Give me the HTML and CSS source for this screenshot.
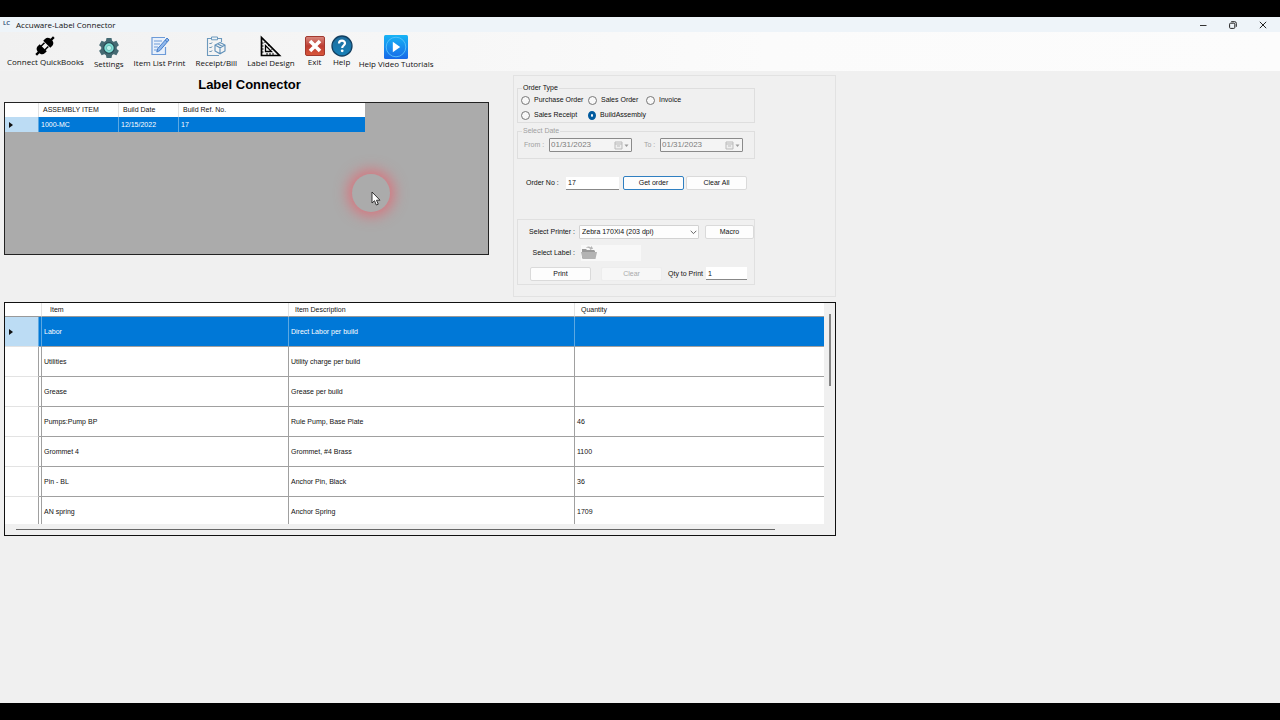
FILE: index.html
```html
<!DOCTYPE html>
<html lang="en">
<head>
<meta charset="utf-8">
<title>Accuware-Label Connector</title>
<link rel="stylesheet" href="styles.css">
</head>
<body>
<div class="window">
  <header class="titlebar">
    <span class="app-icon">LC</span>
    <span class="app-name">Accuware-Label Connector</span>
    <div class="window-buttons">
      <button type="button" aria-label="Minimize"><svg width="8" height="8" viewBox="0 0 8 8"><path d="M1 4.500h6.500" stroke="#333" fill="none"/></svg></button>
      <button type="button" aria-label="Restore"><svg width="8" height="8" viewBox="0 0 8 8"><rect x=".6" y="2.200" width="5.200" height="5.200" rx="1" fill="none" stroke="#222"/><path d="M2.200.7h3.500a1.600 1.600 0 0 1 1.600 1.600v3.500" fill="none" stroke="#222"/></svg></button>
      <button type="button" aria-label="Close"><svg width="8" height="8" viewBox="0 0 8 8"><path d="M.8.8l6.400 6.400M7.200.8L.8 7.200" stroke="#222" fill="none"/></svg></button>
    </div>
  </header>

  <nav class="toolbar">
    <button type="button" class="tool">
      <svg width="20" height="20" viewBox="0 0 20 20"><g transform="rotate(-45 10 10)"><path d="M-2.500 8.800H1.500V11.200H-2.500zM18.500 8.800h4v2.400h-4z"/><path d="M7.500 5v10H5C1.800 15 .8 12.500.8 10S1.800 5 5 5zM12.500 5v10H15c3.200 0 4.200-2.500 4.200-5S18.200 5 15 5z"/><path d="M7 7.300h5M7 12.700h5" stroke="#000" stroke-width="1.500"/></g></svg>
      <span>Connect QuickBooks</span>
    </button>
    <button type="button" class="tool low">
      <svg width="20" height="20" viewBox="0 0 20 20"><g fill="#456a73"><circle cx="10" cy="10" r="7.800"/><path id="tooth" d="M7.500 0h5l.8 4H6.700zM7.500 20h5l.8-4H6.700z"/><use href="#tooth" transform="rotate(60 10 10)"/><use href="#tooth" transform="rotate(120 10 10)"/></g><circle cx="10" cy="10" r="5.300" fill="#7fe0d5" stroke="#274c55" stroke-width="1.200"/><circle cx="10" cy="10" r="2.600" fill="#b9f3ea" stroke="#4b9a9c" stroke-width=".6"/></svg>
      <span>Settings</span>
    </button>
    <button type="button" class="tool">
      <svg width="20" height="21" viewBox="0 0 20 21"><path d="M15 1.500H2v17h13.500V11" fill="#e8f0fb" stroke="#6d9bd8" stroke-width="1.200"/><path d="M4 5h8M4 8h6M4 11h4M4 14h3" stroke="#6d9bd8"/><path d="M17 2l2 2-9 10.500-3.200 1.500 1-3.500z" fill="#8fb7ec" stroke="#477fc9"/><path d="M15.200 4l2 2" stroke="#477fc9"/></svg>
      <span>Item List Print</span>
    </button>
    <button type="button" class="tool">
      <svg width="20" height="21" viewBox="0 0 20 21"><path d="M13 19.500H1.500V2.500h14V6" fill="none" stroke="#6c99bd" stroke-width="1.100"/><path d="M5.500 1h6v2.800h-6z" fill="#eef4f9" stroke="#6c99bd"/><path d="M3.500 7l1 1L6 6.500M3.500 11l1 1L6 10.500M3.500 15l1 1L6 14.500" fill="none" stroke="#47779e"/><path d="M14 6.500l5 2.500v6l-5 2.800L9 15V9zM9 9l5 2.800L19 9M14 11.800v6M11.500 7.800l5 2.800" fill="none" stroke="#5d8fb8" stroke-width="1.100"/></svg>
      <span>Receipt/Bill</span>
    </button>
    <button type="button" class="tool">
      <svg width="21" height="21" viewBox="0 0 21 21"><path d="M1.500 1.500v18h18z" fill="none" stroke="#000" stroke-width="1.700"/><path d="M5.500 9.500v6h6z" fill="none" stroke="#000" stroke-width="1.300"/><path d="M3.500 7h-2M3.500 10h-2M3.500 13h-2M3.500 16h-2M7 17v2M10 17v2M13 17v2M4.500 6.500l1.500-1.200M8 10l1.500-1.200M11.500 13.500l1.500-1.200" stroke="#000"/></svg>
      <span>Label Design</span>
    </button>
    <div class="tool-group">
      <button type="button" class="tool">
        <svg width="20" height="20" viewBox="0 0 20 20"><defs><linearGradient id="red" x2="0" y2="1"><stop stop-color="#d98a80"/><stop offset=".5" stop-color="#bd3d32"/><stop offset="1" stop-color="#d9573b"/></linearGradient></defs><rect x=".5" y=".5" width="19" height="19" rx="1.500" fill="url(#red)" stroke="#a2392f"/><path d="M5 5l10 10M15 5L5 15" stroke="#fff" stroke-width="3.600"/></svg>
        <span>Exit</span>
      </button>
      <button type="button" class="tool high">
        <svg width="22" height="22" viewBox="0 0 22 22"><defs><linearGradient id="teal" x2="0" y2="1"><stop stop-color="#1e6d9d"/><stop offset="1" stop-color="#1680b8"/></linearGradient></defs><circle cx="11" cy="11" r="10" fill="url(#teal)" stroke="#123f61" stroke-width="1.300"/><path d="M8 8.500C8 4.800 14 4.800 14 8.300 14 10.500 11.200 10.500 11.200 13" fill="none" stroke="#fff" stroke-width="2.200"/><circle cx="11.200" cy="15.800" r="1.400" fill="#fff"/></svg>
        <span>Help</span>
      </button>
      <button type="button" class="tool high">
        <svg width="24" height="24" viewBox="0 0 24 24"><defs><linearGradient id="sky" x2="0" y2="1"><stop stop-color="#17b4f5"/><stop offset="1" stop-color="#1769e8"/></linearGradient></defs><rect width="24" height="24" rx="1.500" fill="url(#sky)"/><circle cx="12" cy="12" r="9.800" fill="none" stroke="#58c2fa" stroke-width=".9"/><path d="M8.800 6.800v10.400l7.400-5.200z" fill="#fff"/></svg>
        <span>Help Video Tutorials</span>
      </button>
    </div>
  </nav>

  <main class="content">
    <div class="upper">
      <section class="orders">
        <h1>Label Connector</h1>
        <div class="order-grid">
          <table class="order-table">
            <thead><tr><th class="rowhead"></th><th class="assembly">ASSEMBLY ITEM</th><th class="build-date">Build Date</th><th>Build Ref. No.</th></tr></thead>
            <tbody><tr class="selected"><td class="rowhead"><i class="marker"></i></td><td>1000-MC</td><td>12/15/2022</td><td>17</td></tr></tbody>
          </table>
          <div class="click-halo">
            <svg class="pointer" width="10" height="15" viewBox="0 0 10 15"><path d="M1 1v11l2.500-2.300L5.300 14l2-.8-1.800-4H9z" fill="#fff" stroke="#222" stroke-width=".9"/></svg>
          </div>
        </div>
      </section>

      <form class="panel">
        <fieldset class="order-type">
          <legend>Order Type</legend>
          <label><input type="radio" name="type">Purchase Order</label>
          <label><input type="radio" name="type">Sales Order</label>
          <label><input type="radio" name="type">Invoice</label>
          <label><input type="radio" name="type">Sales Receipt</label>
          <label><input type="radio" name="type" checked>BuildAssembly</label>
        </fieldset>

        <fieldset class="dates" disabled>
          <legend>Select Date</legend>
          <label for="from">From :</label>
          <div class="date-box"><input id="from" type="text" value="01/31/2023"><svg width="16" height="9" viewBox="0 0 16 9"><path d="M1 1h7v7H1zM1 3h7M3 5h3" fill="#eee" stroke="#bbb"/><path d="M10.500 3.500h4l-2 2.500z" fill="#999"/></svg></div>
          <label for="to" class="to">To :</label>
          <div class="date-box"><input id="to" type="text" value="01/31/2023"><svg width="16" height="9" viewBox="0 0 16 9"><path d="M1 1h7v7H1zM1 3h7M3 5h3" fill="#eee" stroke="#bbb"/><path d="M10.500 3.500h4l-2 2.500z" fill="#999"/></svg></div>
        </fieldset>

        <div class="order-row">
          <label for="order">Order No :</label>
          <input id="order" class="field order-no" type="text" value="17">
          <button type="button" class="btn primary">Get order</button>
          <button type="button" class="btn">Clear All</button>
        </div>

        <div class="print-box">
          <div class="print-row">
            <label class="print-label" for="printer">Select Printer :</label>
            <div class="select-wrap"><select id="printer"><option>Zebra 170Xi4 (203 dpi)</option></select><svg width="7" height="5" viewBox="0 0 7 5"><path d="M.7.8l2.800 2.800L6.300.8" fill="none" stroke="#555" stroke-width=".9"/></svg></div>
            <button type="button" class="btn macro">Macro</button>
          </div>
          <div class="print-row">
            <span class="print-label">Select Label :</span>
            <button type="button" class="browse" aria-label="Select label" disabled><svg width="16" height="15" viewBox="0 0 16 15"><path d="M1 6V4h4l1 1h7l1 1v7H1z" fill="#999"/><path d="M0 7h16l-1.500 7h-13z" fill="#b3b3b3"/><path d="M5 3C6 1 8.500 1 10 2.500V.8l2.200 2.700L9 5V3.800C7.500 2.500 6.500 2.500 5 3z" fill="#b5b5b5"/></svg></button>
          </div>
          <div class="print-row actions">
            <button type="button" class="btn">Print</button>
            <button type="button" class="btn clear" disabled>Clear</button>
            <label for="qty">Qty to Print</label>
            <input id="qty" class="field qty" type="text" value="1">
          </div>
        </div>
      </form>
    </div>

    <section class="items">
      <div class="items-view">
        <table class="items-table">
          <thead><tr><th class="rowhead"></th><th class="sliver"></th><th class="item">Item</th><th class="description">Item Description</th><th class="quantity">Quantity</th></tr></thead>
          <tbody>
            <tr class="selected"><td class="rowhead"><i class="marker"></i></td><td></td><td>Labor</td><td>Direct Labor per build</td><td></td></tr>
            <tr><td class="rowhead"></td><td></td><td>Utilities</td><td>Utility charge per build</td><td></td></tr>
            <tr><td class="rowhead"></td><td></td><td>Grease</td><td>Grease per build</td><td></td></tr>
            <tr><td class="rowhead"></td><td></td><td>Pumps:Pump BP</td><td>Rule Pump, Base Plate</td><td>46</td></tr>
            <tr><td class="rowhead"></td><td></td><td>Grommet 4</td><td>Grommet, #4 Brass</td><td>1100</td></tr>
            <tr><td class="rowhead"></td><td></td><td>Pin - BL</td><td>Anchor Pin, Black</td><td>36</td></tr>
            <tr><td class="rowhead"></td><td></td><td>AN spring</td><td>Anchor Spring</td><td>1709</td></tr>
          </tbody>
        </table>
      </div>
      <div class="vscroll"><div class="vthumb"></div></div>
      <div class="hscroll"><div class="hthumb"></div></div>
    </section>
  </main>
</div>
</body>
</html>
```
FILE: styles.css
```css
* { box-sizing: border-box; }

body {
  margin: 0;
  min-height: 100vh;
  padding: 17px 0;
  display: flex;
  background: #000;
  color: #111;
  font: 7px/10px "Liberation Sans", Arial, sans-serif;
}

button, input, select { font: inherit; color: inherit; margin: 0; }

.window {
  flex: 1;
  background: #f0f0f0;
}

/* Title bar */
.titlebar {
  display: flex;
  align-items: center;
  height: 15px;
  padding: 0 9px 0 3px;
  background: #eef4f9;
  font-family: "Open Sans", sans-serif;
  font-size: 8px;
}

.app-icon {
  width: 13px;
  padding-bottom: 4px;
  color: #24406e;
  font-size: 6px;
  font-weight: 600;
}

.window-buttons {
  display: flex;
  gap: 14px;
  margin-left: auto;
}

.window-buttons button {
  width: 16px;
  height: 14px;
  padding: 0;
  border: 0;
  background: none;
}

.window-buttons svg { display: block; margin: 0 auto; }

/* Toolbar */
.toolbar {
  display: flex;
  align-items: flex-start;
  gap: 10px;
  height: 39px;
  padding: 4px 7px 0;
  background: linear-gradient(90deg, #f1f1f1, #fbfbfb 60%, #fcfcfc);
}

.tool-group { display: flex; gap: 6px; }

.tool {
  display: flex;
  flex-direction: column;
  align-items: center;
  gap: 1px;
  padding: 0;
  border: 0;
  background: none;
  font-family: "Open Sans", sans-serif;
  font-size: 8px;
  white-space: nowrap;
}

.tool svg { display: block; overflow: visible; }
.tool.low { padding-top: 2px; }
.tool-group .high { margin-top: -1px; gap: 0; }

/* Main area */
.content {
  width: 65%;
  margin-left: 4px;
  padding-top: 4px;
}

.upper { display: flex; gap: 24px; }

.orders {
  flex: 1;
  display: flex;
  flex-direction: column;
}

h1 {
  margin: 2px 0 9px;
  padding-left: 6px;
  font-size: 13px;
  line-height: 16px;
  text-align: center;
  color: #000;
}

.order-grid {
  position: relative;
  height: 153px;
  border: 1px solid #222;
  background: #ababab;
}

table {
  border-collapse: separate;
  border-spacing: 0;
  table-layout: fixed;
}

th, td {
  padding: 0 2px;
  text-align: left;
  font-weight: 400;
  white-space: nowrap;
}

th { height: 14px; background: #fff; }
.rowhead { width: 34px; }

.order-table { width: 360px; }
.order-table th { padding-left: 4px; border-right: 1px solid #e3e3e3; }
.order-table td { height: 15px; border-right: 1px solid #5ca8e2; }
.order-table th:last-child, .order-table td:last-child { border-right: 0; }
.assembly { width: 80px; }
.build-date { width: 60px; }

.selected td { background: #0078d7; color: #fff; }
.selected td.rowhead { background: #bcdcf4; }

.marker {
  display: block;
  width: 0;
  margin-left: 2px;
  border: solid transparent;
  border-width: 3px 0 3px 4px;
  border-left-color: #111;
}

.click-halo {
  position: absolute;
  left: 347px;
  top: 71px;
  width: 38px;
  height: 38px;
  border-radius: 50%;
  box-shadow: 0 0 14px 4px #d9737c;
}

.pointer {
  position: absolute;
  left: 19px;
  top: 17px;
}

/* Order panel */
.panel {
  width: 323px;
  height: 222px;
  padding: 7px 3px 0;
  border: 1px solid #e2e2e2;
}

fieldset {
  width: 238px;
  margin: 0;
  padding: 0 3px;
  border: 1px solid #dedede;
}

legend { margin-left: 1px; padding: 0 1px; }

.order-type {
  display: grid;
  grid-template-columns: 67px 58px 1fr;
  row-gap: 1px;
  height: 40px;
}

.order-type label {
  display: flex;
  align-items: center;
  gap: 4px;
  height: 14px;
}

input[type="radio"] {
  appearance: none;
  width: 9px;
  height: 9px;
  border: 1px solid #777;
  border-radius: 50%;
  background: #f8f8f8;
}

input[type="radio"]:checked { border: 3px solid #005a9e; background: #fff; }

.dates {
  display: flex;
  align-items: center;
  height: 33px;
  margin-top: 3px;
  padding: 0 3px 4px;
  color: #a0a0a0;
}

.dates > label { width: 28px; padding-left: 3px; }
.dates > .to { margin-left: 12px; width: 16px; padding: 0; }

.date-box {
  display: flex;
  align-items: center;
  width: 83px;
  height: 14px;
  padding: 0 1px;
  border: 1px solid #8a8a8a;
  border-radius: 1px;
  background: #f4f4f4;
}

.date-box input {
  flex: 1;
  min-width: 0;
  padding: 0;
  border: 0;
  background: none;
  color: #7d7d7d;
  font-size: 8px;
}

.order-row {
  display: flex;
  align-items: center;
  gap: 2px;
  margin-top: 17px;
  padding-left: 9px;
}

.order-row label { width: 38px; }

.field {
  height: 13px;
  padding: 0 2px;
  border: 0;
  border-bottom: 1px solid #888;
  background: #fff;
}

.order-no { width: 53px; margin-right: 2px; }

.btn {
  width: 61px;
  height: 14px;
  padding: 0;
  border: 1px solid #dadada;
  border-radius: 2px;
  background: #fdfdfd;
  text-align: center;
  line-height: 10px;
}

.btn.primary { border-color: #2f7fc1; }
.btn:disabled { border-color: #ededed; background: #f7f7f7; color: #aaa; }

.print-box {
  display: flex;
  flex-direction: column;
  gap: 4px;
  width: 238px;
  margin-top: 29px;
  padding: 3px 0 2px;
  border: 1px solid #e0e0e0;
}

.print-row { display: flex; align-items: center; height: 17px; }
.print-label { width: 57px; text-align: right; }

.select-wrap { position: relative; margin: 0 6px 0 4px; }

select {
  appearance: none;
  display: block;
  width: 120px;
  height: 14px;
  padding: 0 2px;
  border: 1px solid #d2d2d2;
  border-radius: 1px;
  background: #fdfdfd;
}

.select-wrap svg { position: absolute; right: 2px; top: 5px; }
.macro { width: 49px; }

.browse {
  width: 60px;
  height: 16px;
  margin-left: 6px;
  padding: 0;
  border: 0;
  background: #f8f8f8;
}

.browse svg { display: block; }

.actions { padding-left: 12px; }
.clear { margin: 0 6px 0 10px; }
.qty { width: 41px; margin-left: 3px; }

/* Item grid */
.items {
  display: grid;
  grid-template-columns: 1fr 11px;
  grid-template-rows: 221px 11px;
  margin-top: 5px;
  border: 1px solid #111;
}

.items-view { overflow: hidden; background: #fff; }
.items-table { width: 100%; }
.items-table th { padding-left: 8px; border-bottom: 1px solid #999; }
.items-table th.sliver { width: 3px; padding: 0; }
.items-table .item { width: 247px; }
.items-table .description, .items-table .quantity { padding-left: 6px; }
.items-table .description { width: 286px; }
.items-table th + th { border-right: 1px solid #e3e3e3; }
.items-table td {
  height: 30px;
  border-right: 1px solid #a0a0a0;
  border-bottom: 1px solid #a0a0a0;
}
.items-table td:nth-child(2) { padding: 0; }
.items-table td:last-child, .items-table th:last-child { border-right: 0; }
.items-table td.rowhead { border-bottom-color: #e3e3e3; }
.items-table .selected td { border-right-color: #5ca8e2; }

.vscroll { padding: 11px 0 0 5px; }
.vthumb { width: 2px; height: 72px; background: #858585; }
.hscroll { padding: 5px 49px 0 11px; }
.hthumb { height: 1px; background: #666; }
```
